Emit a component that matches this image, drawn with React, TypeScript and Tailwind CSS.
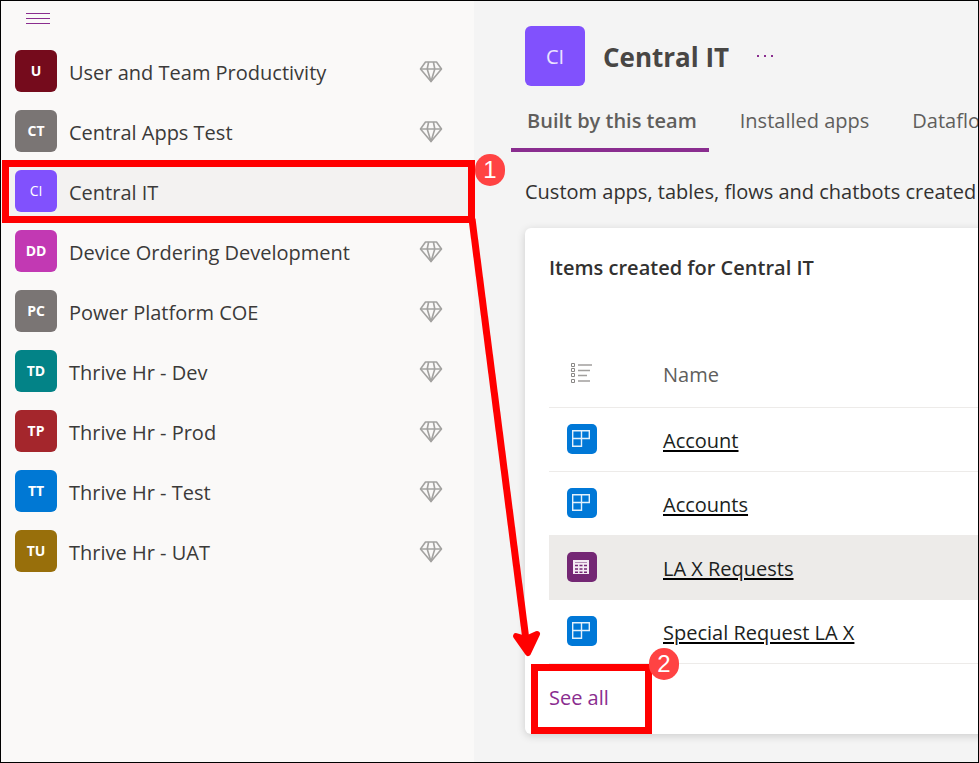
type Environment = {
  initials: string;
  name: string;
  color: string;
  premium: boolean;
};

const environments: Environment[] = [
  { initials: "U", name: "User and Team Productivity", color: "bg-[#750b1c]", premium: true },
  { initials: "CT", name: "Central Apps Test", color: "bg-[#7a7574]", premium: true },
  { initials: "CI", name: "Central IT", color: "bg-[#8151fd]", premium: false },
  { initials: "DD", name: "Device Ordering Development", color: "bg-[#c239b3]", premium: true },
  { initials: "PC", name: "Power Platform COE", color: "bg-[#7a7574]", premium: true },
  { initials: "TD", name: "Thrive Hr - Dev", color: "bg-[#038387]", premium: true },
  { initials: "TP", name: "Thrive Hr - Prod", color: "bg-[#a4262c]", premium: true },
  { initials: "TT", name: "Thrive Hr - Test", color: "bg-[#0078d4]", premium: true },
  { initials: "TU", name: "Thrive Hr - UAT", color: "bg-[#986f0b]", premium: true },
];

const items = [
  { name: "Account", kind: "app" },
  { name: "Accounts", kind: "app" },
  { name: "LA X Requests", kind: "table" },
  { name: "Special Request LA X", kind: "app" },
];

function Diamond() {
  return (
    <svg className="mt-0.5" width="24" height="22" viewBox="0 0 24 22" fill="none" stroke="#a3a2a0" strokeWidth="1.6" strokeLinejoin="round" aria-hidden="true">
      <path d="M6.5 1H17.5L22.5 8L12 20.5L1.5 8Z" />
      <path d="M1.5 8H22.5M8.2 8L12 20.5L15.8 8M9.6 1L8.2 8M14.4 1L15.8 8" />
    </svg>
  );
}

function ListIcon() {
  return (
    <svg width="22" height="21" viewBox="0 0 22 21" fill="none" stroke="#8a8886" aria-hidden="true">
      <path d="M.5 .5h3v3h-3zM.5 5.5h3v3h-3zM.5 10.5h3v3h-3zM.5 16.5h3v3h-3z" />
      <path d="M7 2H21M7 7.5H19M7 12.5H16M7 18H19" stroke="#a19f9d" strokeWidth="1.4" />
    </svg>
  );
}

function ItemIcon({ kind }: { kind: string }) {
  if (kind === "table") {
    return (
      <svg width="30" height="30" viewBox="0 0 30 30" aria-hidden="true">
        <rect width="30" height="30" rx="5" fill="#742774" />
        <rect x="6" y="8" width="16" height="14" fill="#f3eaf3" />
        <path d="M8 10.5H20" stroke="#b38ab3" strokeWidth="1" />
        <path d="M8 13.5h3M12.5 13.5h3M17 13.5h3M8 17h3M12.5 17h3M17 17h3M8 20.3h3M12.5 20.3h3M17 20.3h3" stroke="#742774" strokeWidth="1.6" />
      </svg>
    );
  }
  return (
    <svg width="30" height="30" viewBox="0 0 30 30" fill="none" aria-hidden="true">
      <rect width="30" height="30" rx="5" fill="#0078d7" />
      <path d="M5.7 6.7H22.3V14.5H14.5V22.3H5.7ZM14.5 6.7V14.5H5.7" stroke="#e4f1fb" strokeWidth="1.4" />
    </svg>
  );
}

function Badge({ children }: { children: string }) {
  return (
    <span className="flex h-8 w-[30px] items-center justify-center rounded-full bg-[#ff4343] font-['Liberation_Sans',sans-serif] text-2xl text-white">
      {children}
    </span>
  );
}

export default function App() {
  return (
    <div className="relative flex min-h-screen overflow-hidden border border-black bg-[#f4f4f4] font-['Open_Sans',sans-serif] text-[20px] leading-7 text-[#3b3a39]">
      <nav className="w-[473px] shrink-0 bg-[#faf9f8]" aria-label="Environments">
        <button type="button" aria-label="Toggle navigation" className="ml-[25px] flex h-10 w-6 flex-col gap-1 pt-3">
          <span className="h-px w-full bg-[#8a2d8f]" />
          <span className="h-px w-full bg-[#8a2d8f]" />
          <span className="h-px w-full bg-[#8a2d8f]" />
        </button>
        <ul>
          {environments.map((env) => (
            <li key={env.name} className="relative">
              <button
                type="button"
                className={
                  env.premium
                    ? "flex h-[60px] w-full items-center gap-3 pl-3.5 pr-[31px] text-left"
                    : "flex h-[60px] w-full items-center gap-3 bg-[#f3f2f1] pl-3.5 pr-[31px] text-left"
                }
              >
                <span
                  className={`flex size-[42px] shrink-0 items-center justify-center rounded-md text-sm text-white ${env.premium ? "font-bold" : ""} ${env.color}`}
                >
                  {env.initials}
                </span>
                <span className="grow pt-1">{env.name}</span>
                {env.premium && <Diamond />}
              </button>
              {!env.premium && (
                <>
                  <span className="absolute -bottom-0.5 -right-px -top-px left-px border-[7px] border-[#ff0000]" />
                  <span className="absolute -right-[31px] -top-[7px] z-10">
                    <Badge>1</Badge>
                  </span>
                </>
              )}
            </li>
          ))}
        </ul>
      </nav>

      <main className="min-w-0 grow overflow-hidden pl-[51px] pt-[25px]">
        <header className="flex items-center">
          <span className="flex size-[60px] items-center justify-center rounded-md bg-[#8151fd] pt-0.5 text-[20px] text-white/85">CI</span>
          <h1 className="ml-[18px] pt-0.5 text-[26px] font-bold leading-9 text-[#484644]">Central IT</h1>
          <button type="button" aria-label="More options" className="ml-7 flex gap-[5px]">
            <span className="size-0.5 bg-[#8a2d8f]" />
            <span className="size-0.5 bg-[#8a2d8f]" />
            <span className="size-0.5 bg-[#8a2d8f]" />
          </button>
        </header>

        <div role="tablist" className="-ml-3.5 mt-5 flex gap-[15px] whitespace-nowrap text-[#605e5c]">
          <button type="button" role="tab" aria-selected="true" className="h-[46px] border-b-4 border-[#8a2d8f] pb-3 pl-4 pr-3 font-semibold">
            Built by this team
          </button>
          <button type="button" role="tab" aria-selected="false" className="h-[46px] border-b-4 border-transparent pb-3 pl-4 pr-3">
            Installed apps
          </button>
          <button type="button" role="tab" aria-selected="false" className="h-[46px] border-b-4 border-transparent pb-3 pl-4 pr-3">
            Dataflows
          </button>
        </div>

        <p className="mt-[26px] whitespace-nowrap text-[#323130]">Custom apps, tables, flows and chatbots created</p>

        <section className="-mr-4 mt-[22px] rounded-md bg-white pl-6 pt-[26px] shadow-[0_2px_8px_rgba(0,0,0,0.16)]">
          <h2 className="font-semibold text-[#323130]">Items created for Central IT</h2>
          <table className="mt-[61px] w-full border-collapse text-left">
            <thead>
              <tr className="h-16 border-b border-[#edebe9] text-[#605e5c]">
                <th scope="col" className="w-[114px] pb-0.5 pl-[22px] font-normal" aria-label="Type">
                  <ListIcon />
                </th>
                <th scope="col" className="font-normal">Name</th>
              </tr>
            </thead>
            <tbody>
              {items.map((item) => (
                <tr
                  key={item.name}
                  className={item.kind === "table" ? "h-16 border-b border-[#edebe9] bg-[#edebe9]" : "h-16 border-b border-[#edebe9]"}
                >
                  <td className="pl-[18px]">
                    <ItemIcon kind={item.kind} />
                  </td>
                  <td className="pt-1">
                    <a href="#" className="text-[#201f1e] underline decoration-black decoration-2 underline-offset-2">
                      {item.name}
                    </a>
                  </td>
                </tr>
              ))}
            </tbody>
          </table>
          <div className="flex h-[70px] items-center pb-0.5">
            <span className="relative">
              <a href="#" className="text-[#8a2d8f]">See all</a>
              <span className="pointer-events-none absolute -bottom-[22px] -left-[18px] -top-5 w-[121px] border-[7px] border-[#ff0000]" />
              <span className="absolute -top-9 left-[100px]">
                <Badge>2</Badge>
              </span>
            </span>
          </div>
        </section>
      </main>

      <svg className="pointer-events-none absolute left-0 top-0" width="560" height="670" viewBox="1 1 560 670" fill="none" stroke="#ff0000" strokeLinecap="round" strokeLinejoin="round" aria-hidden="true">
        <path d="M472 219L526 640" strokeWidth="7" strokeLinecap="butt" />
        <path d="M516 636L528 653L537 634L526 639Z" fill="#ff0000" strokeWidth="6" />
      </svg>
    </div>
  );
}
